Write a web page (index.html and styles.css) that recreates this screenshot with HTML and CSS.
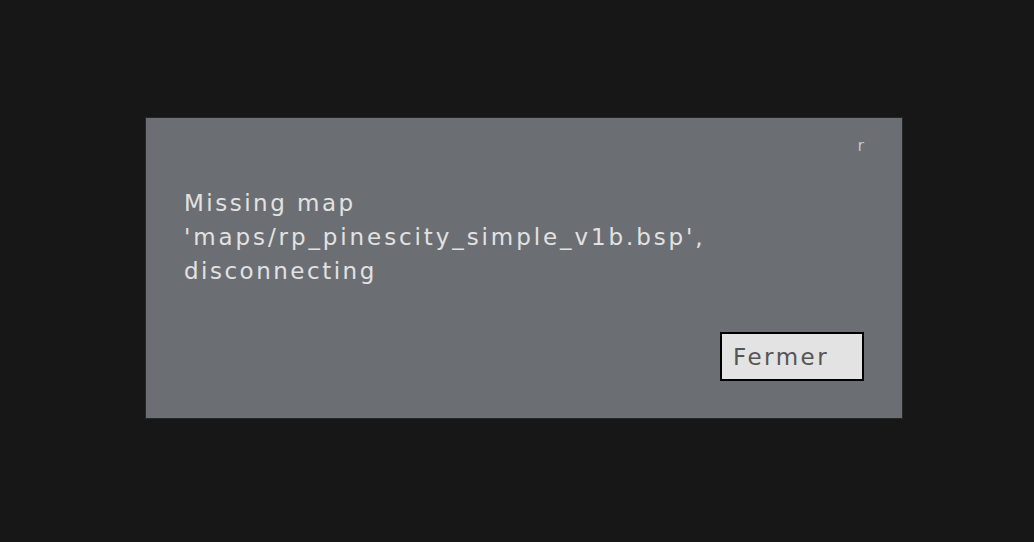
FILE: index.html
```html
<!DOCTYPE html>
<html>
<head>
<meta charset="utf-8">
<link rel="stylesheet" href="styles.css">
</head>
<body>
<div class="stage">
  <div class="dialog">
    <span class="close">r</span>
    <div class="message">
      <div class="line">Missing map</div>
      <div class="line line-path">'maps/rp_pinescity_simple_v1b.bsp',</div>
      <div class="line">disconnecting</div>
    </div>
    <div class="actions">
      <button class="btn">Fermer</button>
    </div>
  </div>
</div>
</body>
</html>
```

FILE: styles.css
```css
html, body {
  margin: 0;
  padding: 0;
  background: #171717;
  width: 1034px;
  height: 542px;
  overflow: hidden;
}
.stage {
  padding: 117px 0 0 145px;
}
.dialog {
  position: relative;
  box-sizing: border-box;
  width: 758px;
  height: 302px;
  background: #6b6e73;
  border: 1px solid #262626;
  padding: 68px 38px 0 38px;
  display: flex;
  flex-direction: column;
  font-family: "DejaVu Sans", sans-serif;
}
.close {
  position: absolute;
  right: 38px;
  top: 18px;
  font-size: 16px;
  color: #c4c4c4;
}
.message {
  color: #e2e2e2;
  font-size: 23px;
  line-height: 34px;
  letter-spacing: 2.5px;
}
.line-path {
  letter-spacing: 2.9px;
}
.actions {
  display: flex;
  justify-content: flex-end;
  margin-top: 44px;
}
.btn {
  box-sizing: border-box;
  width: 144px;
  height: 49px;
  border: 2px solid #000;
  background: #e3e3e3;
  color: #555;
  font-family: "DejaVu Sans", sans-serif;
  font-size: 23px;
  letter-spacing: 2.5px;
  text-align: left;
  padding: 0 0 0 11px;
  margin: 0;
}
```
